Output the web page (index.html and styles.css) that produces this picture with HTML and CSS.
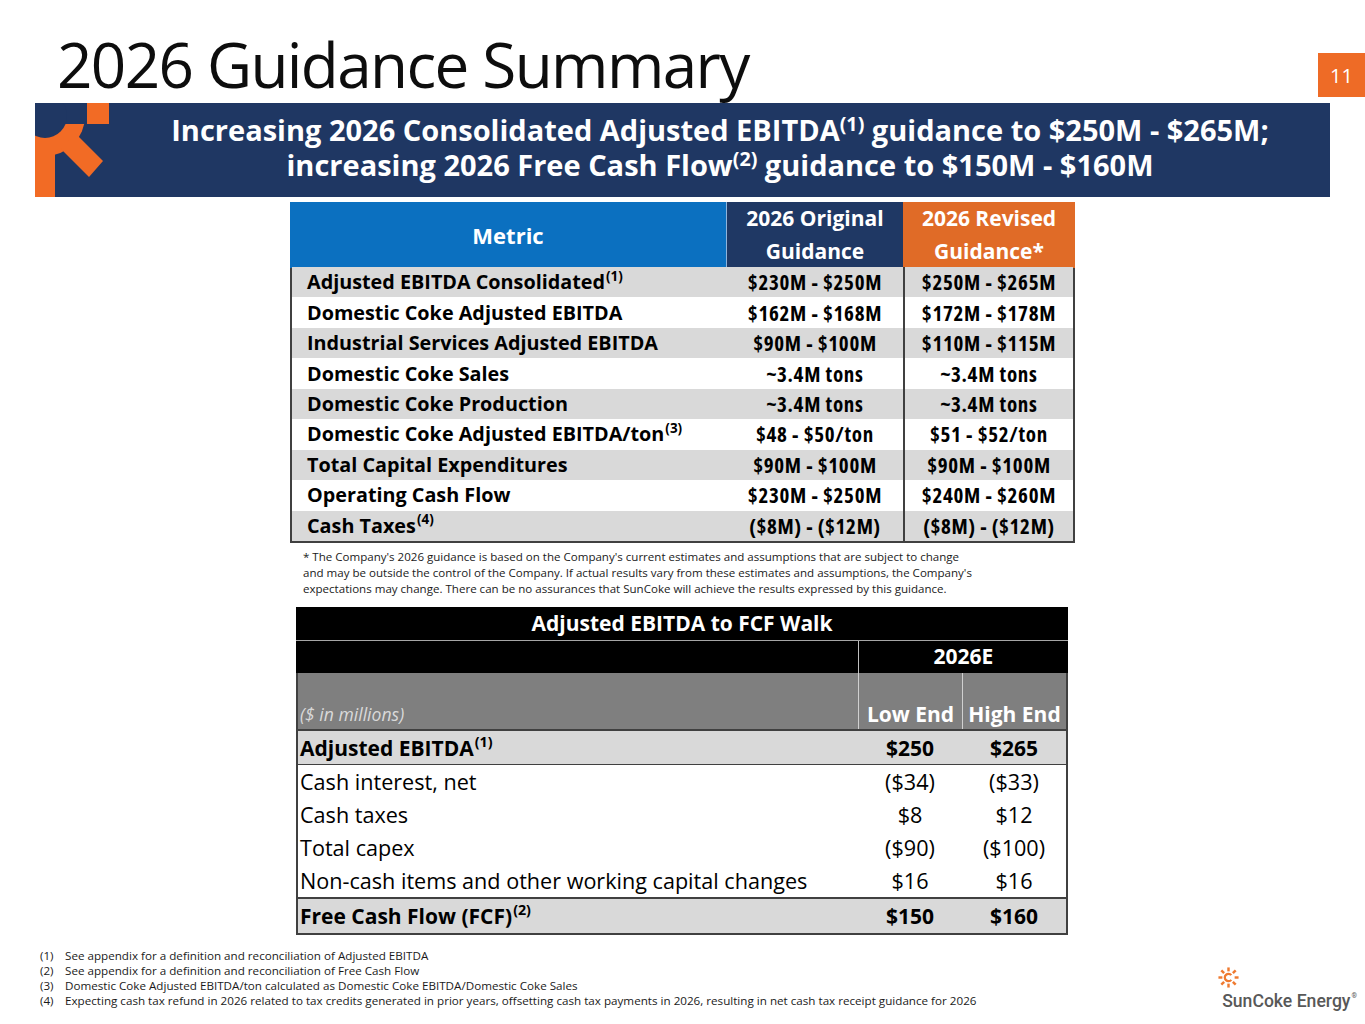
FILE: index.html
```html
<!DOCTYPE html>
<html lang="en">
<head>
<meta charset="utf-8">
<title>2026 Guidance Summary</title>
<link rel="stylesheet" href="styles.css">
</head>
<body>
<div class="slide">
  <header class="top">
    <h1 class="title">2026 Guidance Summary</h1>
    <div class="pagenum">11</div>
  </header>

  <section class="banner">
    <svg class="banner-logo" viewBox="0 0 75 94" width="75" height="94" aria-hidden="true">
      <circle cx="10" cy="13" r="40" fill="#f26b25"/>
      <polygon points="40,30 68,58 54,74 26,46" fill="#f26b25"/>
      <rect x="0" y="30" width="20" height="64" fill="#f26b25"/>
      <rect x="0" y="0" width="52" height="21" fill="#1f3763"/>
      <circle cx="10" cy="13" r="22" fill="#1f3763"/>
      <rect x="52" y="0" width="22" height="21" fill="#f26b25"/>
    </svg>
    <div class="banner-text">
      <p>Increasing 2026 Consolidated Adjusted EBITDA<sup>(1)</sup> guidance to $250M - $265M;</p>
      <p>increasing 2026 Free Cash Flow<sup>(2)</sup> guidance to $150M - $160M</p>
    </div>
  </section>

  <section class="guidance">
    <div class="g-head">
      <div class="gh gh-metric">Metric</div>
      <div class="gh gh-orig">2026 Original<br>Guidance</div>
      <div class="gh gh-rev">2026 Revised<br>Guidance*</div>
    </div>
    <div class="g-body">
      <div class="g-row shade"><div class="g-label">Adjusted EBITDA Consolidated<sup>(1)</sup></div><div class="g-val">$230M - $250M</div><div class="g-val rev">$250M - $265M</div></div>
      <div class="g-row"><div class="g-label">Domestic Coke Adjusted EBITDA</div><div class="g-val">$162M - $168M</div><div class="g-val rev">$172M - $178M</div></div>
      <div class="g-row shade"><div class="g-label">Industrial Services Adjusted EBITDA</div><div class="g-val">$90M - $100M</div><div class="g-val rev">$110M - $115M</div></div>
      <div class="g-row"><div class="g-label">Domestic Coke Sales</div><div class="g-val">~3.4M tons</div><div class="g-val rev">~3.4M tons</div></div>
      <div class="g-row shade"><div class="g-label">Domestic Coke Production</div><div class="g-val">~3.4M tons</div><div class="g-val rev">~3.4M tons</div></div>
      <div class="g-row"><div class="g-label">Domestic Coke Adjusted EBITDA/ton<sup>(3)</sup></div><div class="g-val">$48 - $50/ton</div><div class="g-val rev">$51 - $52/ton</div></div>
      <div class="g-row shade"><div class="g-label">Total Capital Expenditures</div><div class="g-val">$90M - $100M</div><div class="g-val rev">$90M - $100M</div></div>
      <div class="g-row"><div class="g-label">Operating Cash Flow</div><div class="g-val">$230M - $250M</div><div class="g-val rev">$240M - $260M</div></div>
      <div class="g-row shade"><div class="g-label">Cash Taxes<sup>(4)</sup></div><div class="g-val">($8M) - ($12M)</div><div class="g-val rev">($8M) - ($12M)</div></div>
    </div>
  </section>

  <p class="disclaimer">* The Company's 2026 guidance is based on the Company's current estimates and assumptions that are subject to change<br>and may be outside the control of the Company. If actual results vary from these estimates and assumptions, the Company's<br>expectations may change. There can be no assurances that SunCoke will achieve the results expressed by this guidance.</p>

  <section class="walk">
    <div class="w-title">Adjusted EBITDA to FCF Walk</div>
    <div class="w-row w-year"><div></div><div class="yr">2026E</div></div>
    <div class="w-row w-cols"><div class="units">($ in millions)</div><div class="colh">Low End</div><div class="colh">High End</div></div>
    <div class="w-row w-total w-first"><div class="w-label">Adjusted EBITDA<sup>(1)</sup></div><div class="w-val">$250</div><div class="w-val">$265</div></div>
    <div class="w-row w-item"><div class="w-label">Cash interest, net</div><div class="w-val">($34)</div><div class="w-val">($33)</div></div>
    <div class="w-row w-item"><div class="w-label">Cash taxes</div><div class="w-val">$8</div><div class="w-val">$12</div></div>
    <div class="w-row w-item"><div class="w-label">Total capex</div><div class="w-val">($90)</div><div class="w-val">($100)</div></div>
    <div class="w-row w-item"><div class="w-label">Non-cash items and other working capital changes</div><div class="w-val">$16</div><div class="w-val">$16</div></div>
    <div class="w-row w-total w-last"><div class="w-label">Free Cash Flow (FCF)<sup>(2)</sup></div><div class="w-val">$150</div><div class="w-val">$160</div></div>
  </section>

  <footer class="foot">
    <ol class="notes">
      <li><span class="n">(1)</span><span>See appendix for a definition and reconciliation of Adjusted EBITDA</span></li>
      <li><span class="n">(2)</span><span>See appendix for a definition and reconciliation of Free Cash Flow</span></li>
      <li><span class="n">(3)</span><span>Domestic Coke Adjusted EBITDA/ton calculated as Domestic Coke EBITDA/Domestic Coke Sales</span></li>
      <li><span class="n">(4)</span><span>Expecting cash tax refund in 2026 related to tax credits generated in prior years, offsetting cash tax payments in 2026, resulting in net cash tax receipt guidance for 2026</span></li>
    </ol>
    <div class="brand">
      <svg class="sun" viewBox="0 0 24 24" width="21" height="21" aria-hidden="true">
        <g stroke="#ef7a30" stroke-width="2.8" stroke-linecap="butt" fill="none">
          <line x1="19" y1="12" x2="23.5" y2="12"/>
          <line x1="17" y1="17" x2="20.2" y2="20.2"/>
          <line x1="12" y1="19" x2="12" y2="23.5"/>
          <line x1="7" y1="17" x2="3.8" y2="20.2"/>
          <line x1="5" y1="12" x2="0.5" y2="12"/>
          <line x1="7" y1="7" x2="3.8" y2="3.8"/>
          <line x1="12" y1="5" x2="12" y2="0.5"/>
          <line x1="17" y1="7" x2="20.2" y2="3.8"/>
          <path d="M15.2 9.3 A4.2 4.2 0 1 0 15.2 14.7" stroke-width="2.6"/>
        </g>
      </svg>
      <div class="brand-name">SunCoke Energy<span class="reg">®</span></div>
    </div>
  </footer>
</div>
</body>
</html>
```

FILE: styles.css
```css
* { box-sizing: border-box; }

body {
  margin: 0;
  background: #ffffff;
  font-family: "Open Sans", "Liberation Sans", sans-serif;
  color: #000;
}

.slide {
  width: 1365px;
  height: 1024px;
  overflow: hidden;
}

sup {
  font-size: 0.68em;
  line-height: 0;
  vertical-align: 0.6em;
}

/* ---------- header ---------- */
.top {
  display: flex;
  justify-content: space-between;
  align-items: flex-start;
  height: 103px;
}

.title {
  margin: 0;
  padding: 33px 0 0 57px;
  font-size: 62px;
  line-height: 62px;
  font-weight: 400;
  letter-spacing: -1.6px;
  color: #0d0d0d;
  white-space: nowrap;
}

.pagenum {
  margin-top: 53px;
  width: 47px;
  height: 44px;
  background: #ee6b26;
  color: #fff;
  font-size: 20px;
  display: flex;
  align-items: center;
  justify-content: center;
}

/* ---------- banner ---------- */
.banner {
  margin-left: 35px;
  width: 1295px;
  height: 94px;
  background: #1f3763;
  display: flex;
}

.banner-logo {
  flex: none;
  display: block;
}

.banner-text {
  flex: 1;
  text-align: center;
  color: #fff;
  font-weight: 700;
  font-size: 29px;
  line-height: 35px;
  padding-top: 9px;
}

.banner-text p {
  margin: 0;
  white-space: nowrap;
}

.banner-text sup { vertical-align: 0.5em; }

/* ---------- guidance table ---------- */
.guidance {
  margin: 5px 0 0 290px;
  width: 785px;
}

.g-head {
  display: grid;
  grid-template-columns: 437px 176px 172px;
  height: 65px;
}

.gh {
  color: #fff;
  font-weight: 700;
  font-size: 21px;
  line-height: 33px;
  display: flex;
  align-items: center;
  justify-content: center;
  text-align: center;
  white-space: nowrap;
}

.gh-metric { background: #0b70c0; border-right: 1px solid #8fb4dc; font-size: 22px; }
.gh-orig { background: #1f3864; }
.gh-rev { background: #e06b27; }

.g-body {
  height: 276px;
  border: 2px solid #404040;
  border-top: none;
  display: grid;
  grid-template-rows: repeat(9, 1fr);
}

.g-row {
  display: grid;
  grid-template-columns: 435px 176px 1fr;
}

.g-row.shade { background: #d9d9d9; }

.g-label {
  align-self: center;
  padding-left: 15px;
  font-weight: 700;
  font-size: 19.8px;
  line-height: 28px;
  white-space: nowrap;
}

.g-label sup { vertical-align: 0.62em; margin-left: 1px; }

.g-val {
  display: flex;
  align-items: center;
  justify-content: center;
  font-weight: 700;
  font-size: 21px;
  font-stretch: 75%;
  letter-spacing: 0.7px;
  white-space: nowrap;
}

.g-val.rev { border-left: 2px solid #404040; }

/* ---------- disclaimer ---------- */
.disclaimer {
  margin: 6px 0 0 303px;
  font-size: 11.55px;
  line-height: 16px;
  color: #1a1a1a;
  white-space: nowrap;
}

/* ---------- walk table ---------- */
.walk {
  margin: 10px 0 0 296px;
  width: 772px;
  border: 2px solid #404040;
  border-top: none;
}

.w-title {
  height: 34px;
  background: #000;
  color: #fff;
  font-weight: 700;
  font-size: 21px;
  line-height: 33px;
  text-align: center;
  border-bottom: 1px solid #a6a6a6;
  margin: 0 -2px;
}

.w-row {
  display: grid;
  grid-template-columns: 560px 104px 104px;
}

.w-year {
  height: 32px;
  background: #000;
  margin: 0 -2px;
  grid-template-columns: 562px 1fr;
}

.w-year .yr {
  border-left: 1px solid #bfbfbf;
  color: #fff;
  font-weight: 700;
  font-size: 21px;
  line-height: 31px;
  text-align: center;
}

.w-cols {
  height: 56px;
  background: #7f7f7f;
  align-items: end;
}

.units {
  font-style: italic;
  color: #d9d9d9;
  font-size: 17.6px;
  line-height: 24px;
  padding: 0 0 3px 2px;
  white-space: nowrap;
}

.colh {
  height: 100%;
  border-left: 1px solid #d0d0d0;
  color: #fff;
  font-weight: 700;
  font-size: 21px;
  display: flex;
  align-items: flex-end;
  justify-content: center;
  line-height: 30px;
  white-space: nowrap;
}

.w-label {
  align-self: center;
  padding-left: 2px;
  line-height: 30px;
  white-space: nowrap;
}

.w-val {
  display: flex;
  align-items: center;
  justify-content: center;
  white-space: nowrap;
}

.w-total {
  height: 36px;
  background: #d9d9d9;
  font-weight: 700;
  font-size: 21px;
  border-top: 2px solid #404040;
}

.w-total sup { vertical-align: 0.6em; margin-left: 1px; }

.w-first { border-bottom: 1px solid #404040; }

.w-item {
  height: 33px;
  font-size: 21.6px;
}

/* ---------- footer ---------- */
.foot {
  display: flex;
  justify-content: space-between;
  align-items: flex-start;
  margin-top: 13px;
}

.notes {
  list-style: none;
  margin: 0;
  padding: 0 0 0 40px;
  font-size: 11.65px;
  line-height: 15px;
  color: #1a1a1a;
}

.notes li {
  display: grid;
  grid-template-columns: 25px auto;
  white-space: nowrap;
}

.brand {
  margin-right: 8px;
  padding-top: 19px;
  display: flex;
  flex-direction: column;
  align-items: flex-start;
}

.sun { display: block; margin-left: 3px; }

.brand-name {
  margin-top: -2px;
  padding-left: 7px;
  font-family: Roboto, "Liberation Sans", sans-serif;
  font-size: 17.6px;
  line-height: 20px;
  font-weight: 500;
  color: #585858;
  white-space: nowrap;
}

.reg {
  font-size: 7px;
  vertical-align: 9px;
  margin-left: 1px;
}
```
